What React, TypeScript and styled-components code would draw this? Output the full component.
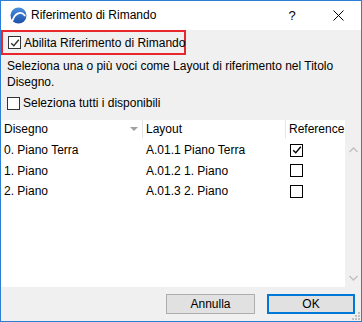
import styled, { createGlobalStyle } from "styled-components";

const GlobalStyle = createGlobalStyle`
    html, body {
        margin: 0;
        padding: 0;
        background: #ffffff;
    }
    body {
        font-family: "Liberation Sans", Arial, sans-serif;
        font-size: 12px;
        color: #000000;
    }
    * {
        box-sizing: border-box;
    }
`;

const rows = [
    { drawing: "0. Piano Terra", layout: "A.01.1 Piano Terra", checked: true },
    { drawing: "1. Piano", layout: "A.01.2 1. Piano", checked: false },
    { drawing: "2. Piano", layout: "A.01.3 2. Piano", checked: false },
];

const Logo = () => (
    <svg width="17" height="17" viewBox="0 0 17 17">
        <defs>
            <linearGradient id="lg" x1="0" y1="0" x2="0" y2="1">
                <stop offset="0" stopColor="#4b8fe0" />
                <stop offset="1" stopColor="#1b4fa8" />
            </linearGradient>
        </defs>
        <circle cx="8.5" cy="8.5" r="8" fill="url(#lg)" />
        <path d="M2.5 13.5 C5 6 11 3.5 14.8 8.5" stroke="#ffffff" strokeWidth="1.8" fill="none" strokeLinecap="round" />
    </svg>
);

const Check = ({ checked, tone }: { checked: boolean; tone?: string }) => (
    <CheckBox $tone={tone}>
        {checked && (
            <svg width="10" height="10" viewBox="0 0 10 10">
                <path d="M1.2 5.2 L3.8 7.8 L8.8 1.8" stroke={tone || "#000"} strokeWidth="1.4" fill="none" />
            </svg>
        )}
    </CheckBox>
);

const App = () => {
    return (
        <>
            <GlobalStyle />
            <Window>
                <TitleBar>
                    <Logo />
                    <Title>Riferimento di Rimando</Title>
                    <TitleButton>?</TitleButton>
                    <TitleButton>
                        <svg width="11" height="11" viewBox="0 0 11 11">
                            <path d="M0.5 0.5 L10.5 10.5 M10.5 0.5 L0.5 10.5" stroke="#000" strokeWidth="1" />
                        </svg>
                    </TitleButton>
                </TitleBar>
                <Body>
                    <Highlight>
                        <CheckRow>
                            <Check checked tone="#333" />
                            <span>Abilita Riferimento di Rimando</span>
                        </CheckRow>
                    </Highlight>
                    <Description>
                        Seleziona una o più voci come Layout di riferimento nel Titolo Disegno.
                    </Description>
                    <SelectAll>
                        <Check checked={false} tone="#333" />
                        <span>Seleziona tutti i disponibili</span>
                    </SelectAll>
                    <TableArea>
                        <Table>
                            <HeaderRow>
                                <HeaderCell $w={142}>
                                    Disegno
                                    <SortArrow />
                                </HeaderCell>
                                <HeaderCell $w={143}>Layout</HeaderCell>
                                <HeaderCell $w={57} $last>Reference</HeaderCell>
                            </HeaderRow>
                            {rows.map((r) => (
                                <DataRow key={r.drawing}>
                                    <Cell $w={142}>{r.drawing}</Cell>
                                    <Cell $w={143}>{r.layout}</Cell>
                                    <Cell $w={57} $center>
                                        <Check checked={r.checked} tone="#000" />
                                    </Cell>
                                </DataRow>
                            ))}
                        </Table>
                        <ScrollBar>
                            <Chevron viewBox="0 0 9 6">
                                <path d="M0.5 5 L4.5 1 L8.5 5" />
                            </Chevron>
                            <Chevron viewBox="0 0 9 6">
                                <path d="M0.5 1 L4.5 5 L8.5 1" />
                            </Chevron>
                        </ScrollBar>
                    </TableArea>
                    <Footer>
                        <Button>Annulla</Button>
                        <Button $primary>OK</Button>
                        <Grip viewBox="0 0 8 8">
                            <rect x="6" y="0" width="2" height="2" />
                            <rect x="3" y="3" width="2" height="2" />
                            <rect x="6" y="3" width="2" height="2" />
                            <rect x="0" y="6" width="2" height="2" />
                            <rect x="3" y="6" width="2" height="2" />
                            <rect x="6" y="6" width="2" height="2" />
                        </Grip>
                    </Footer>
                </Body>
            </Window>
        </>
    );
};

export default App;

const Window = styled.div`
    width: 362px;
    height: 322px;
    border: 1px solid #2b7fd6;
    background: #f0f0f0;
    display: flex;
    flex-direction: column;
`;

const TitleBar = styled.div`
    height: 29px;
    background: #ffffff;
    display: flex;
    align-items: center;
    padding-left: 9px;
    flex-shrink: 0;
`;

const Title = styled.div`
    margin-left: 4px;
    font-size: 12px;
    flex: 1;
    padding-bottom: 1px;
`;

const TitleButton = styled.div`
    width: 46px;
    height: 29px;
    display: flex;
    align-items: center;
    justify-content: center;
    font-size: 13px;
`;

const Body = styled.div`
    flex: 1;
    display: flex;
    flex-direction: column;
`;

const Highlight = styled.div`
    align-self: flex-start;
    width: 185px;
    height: 25px;
    border: 2px solid #e8262b;
    display: flex;
    align-items: center;
    padding-left: 5px;
    white-space: nowrap;
`;

const CheckRow = styled.label`
    display: flex;
    align-items: center;
    gap: 3px;
`;

const CheckBox = styled.span<{ $tone?: string }>`
    width: 13px;
    height: 13px;
    border: 1px solid ${(p) => p.$tone || "#333"};
    background: #ffffff;
    display: inline-flex;
    align-items: center;
    justify-content: center;
    flex-shrink: 0;
`;

const Description = styled.div`
    padding: 3px 0 0 6px;
    line-height: 16px;
`;

const SelectAll = styled.label`
    display: flex;
    align-items: center;
    gap: 3px;
    padding-left: 6px;
    margin-top: 6px;
    height: 14px;
`;

const TableArea = styled.div`
    margin-top: 10px;
    display: flex;
    height: 167px;
`;

const Table = styled.div`
    width: 344px;
    background: #ffffff;
    display: flex;
    flex-direction: column;
`;

const HeaderRow = styled.div`
    display: flex;
    height: 18px;
    margin-bottom: 2px;
`;

const HeaderCell = styled.div<{ $w: number; $last?: boolean }>`
    width: ${(p) => p.$w}px;
    display: flex;
    align-items: center;
    padding-left: 3px;
    border-right: 1px solid ${(p) => (p.$last ? "transparent" : "#e5e5e5")};
    position: relative;
`;

const SortArrow = styled.span`
    position: absolute;
    right: 4px;
    top: 7px;
    width: 0;
    height: 0;
    border-left: 4px solid transparent;
    border-right: 4px solid transparent;
    border-top: 4px solid #a0a0a0;
`;

const DataRow = styled.div`
    display: flex;
    height: 20.5px;
`;

const Cell = styled.div<{ $w: number; $center?: boolean }>`
    width: ${(p) => p.$w}px;
    display: flex;
    align-items: center;
    padding-left: ${(p) => (p.$center ? "4px" : "3px")};
`;

const ScrollBar = styled.div`
    flex: 1;
    display: flex;
    flex-direction: column;
    justify-content: space-between;
    align-items: center;
    padding: 27px 0 6px;
`;

const Chevron = styled.svg`
    width: 9px;
    height: 6px;
    fill: none;
    stroke: #c2c2c2;
    stroke-width: 1.5;
`;

const Footer = styled.div`
    flex: 1;
    display: flex;
    justify-content: flex-end;
    align-items: flex-start;
    gap: 12px;
    padding: 7px 6px 0 0;
    position: relative;
`;

const Button = styled.button<{ $primary?: boolean }>`
    width: ${(p) => (p.$primary ? "88px" : "89px")};
    height: 20px;
    background: #e1e1e1;
    border: ${(p) => (p.$primary ? "2px solid #0078d7" : "1px solid #adadad")};
    font-family: inherit;
    font-size: 12px;
    color: #000;
    padding: 0;
`;

const Grip = styled.svg`
    position: absolute;
    right: 1px;
    bottom: 1px;
    width: 8px;
    height: 8px;
    fill: #c0c0c0;
`;
